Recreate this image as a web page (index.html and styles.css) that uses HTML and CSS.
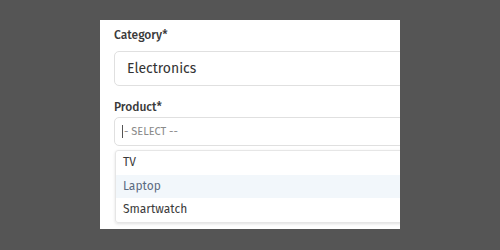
FILE: index.html
```html
<!DOCTYPE html>
<html>
<head>
<meta charset="utf-8">
<link rel="stylesheet" href="styles.css">
</head>
<body>
<div class="panel">
  <div class="field">
    <div class="label">Category*</div>
    <div class="input input-lg">Electronics</div>
  </div>
  <div class="field">
    <div class="label label-2">Product*</div>
    <div class="input input-sm"><span class="caret"></span><span class="placeholder">- SELECT --</span></div>
    <ul class="menu">
      <li>TV</li>
      <li class="active">Laptop</li>
      <li>Smartwatch</li>
    </ul>
  </div>
</div>
</body>
</html>
```

FILE: styles.css
```css
html, body {
  margin: 0;
  padding: 0;
  background: #555555;
  height: 250px;
  overflow: hidden;
}
body {
  font-family: "Fira Sans", "Open Sans", sans-serif;
  color: #333;
}
.panel {
  margin: 20px 0 0 100px;
  width: 300px;
  height: 209px;
  background: #fff;
  overflow: hidden;
  padding: 7px 0 0 14px;
  box-sizing: border-box;
}
.label {
  font-size: 12px;
  font-weight: 500;
  line-height: 16px;
  color: #3a3a3a;
  margin-bottom: 8px;
}
.label-2 {
  margin-top: 13px;
  margin-bottom: 2px;
}
.input {
  width: 320px;
  box-sizing: border-box;
  border: 1px solid #e0e0e0;
  border-radius: 5px;
  display: flex;
  align-items: center;
}
.input-lg {
  height: 35px;
  padding-left: 12px;
  font-size: 14px;
  color: #333;
}
.input-sm {
  height: 29px;
  padding-left: 7px;
  font-size: 11px;
  color: #8a8a8a;
}
.caret {
  width: 1px;
  height: 13px;
  background: #555;
  margin-right: 1px;
}
.menu {
  list-style: none;
  margin: 4px 0 0 1px;
  padding: 0;
  width: 320px;
  border: 1px solid #e6e6e6;
  border-radius: 3px;
  box-shadow: 0 1px 3px rgba(0,0,0,0.12);
}
.menu li {
  height: 23.5px;
  line-height: 23.5px;
  padding-left: 7px;
  font-size: 12px;
  color: #3a3a3a;
}
.menu li.active {
  background: #f2f7fb;
  color: #5b6b80;
}
```
